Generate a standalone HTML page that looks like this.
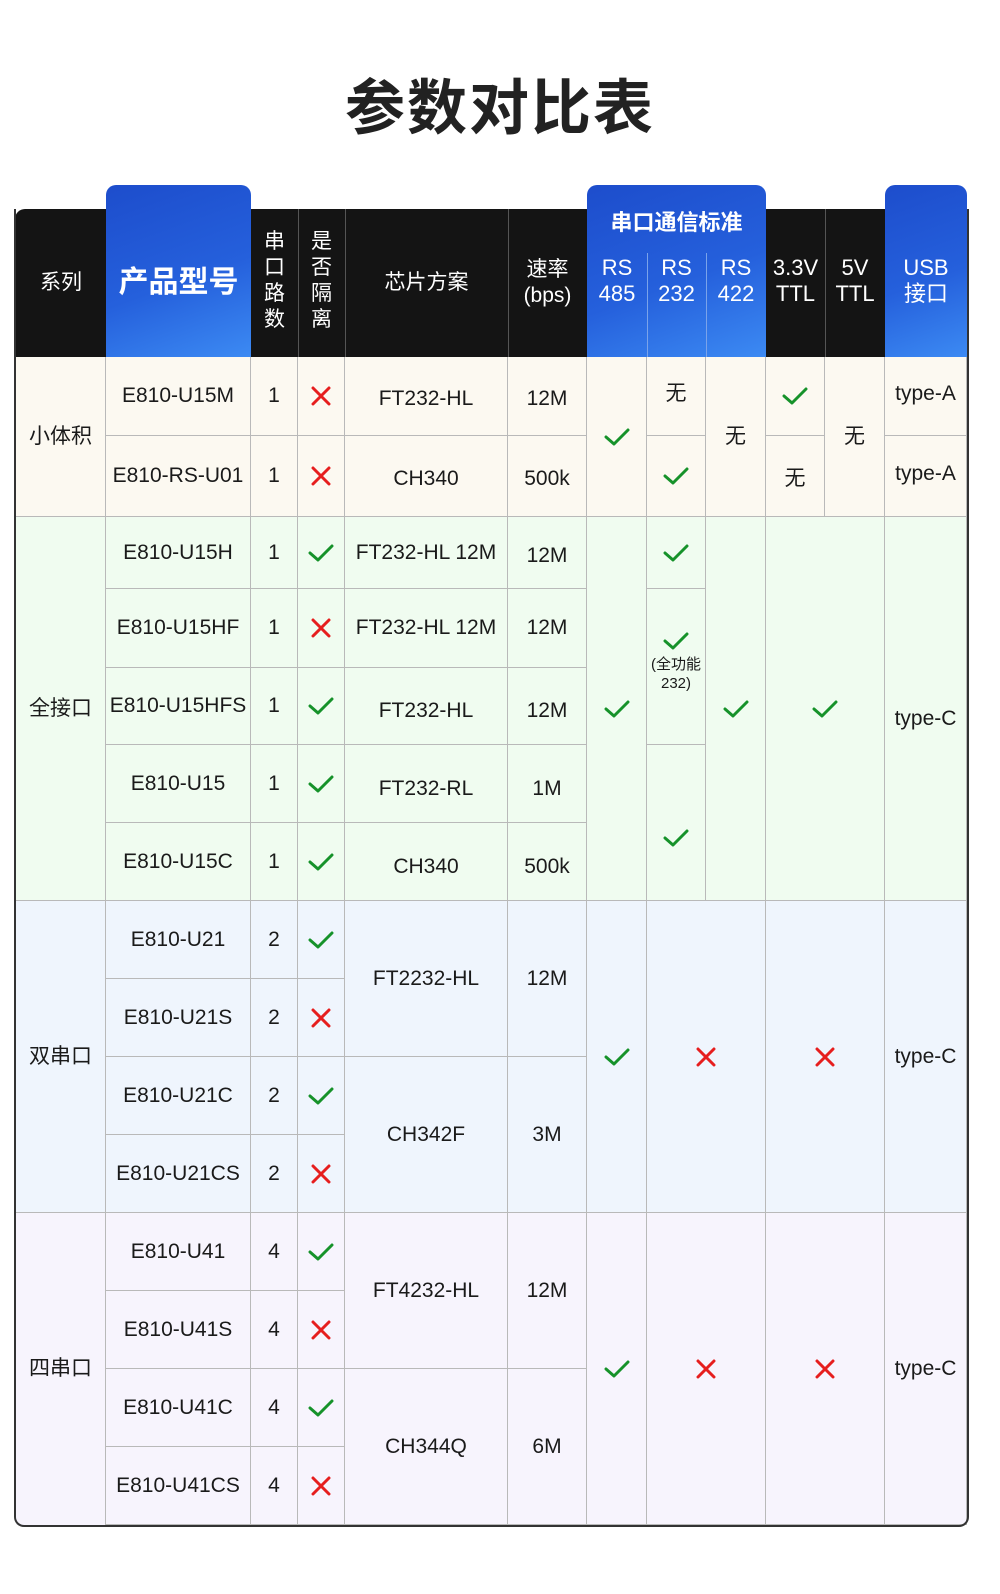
<!DOCTYPE html>
<html><head><meta charset="utf-8"><style>
*{margin:0;padding:0;box-sizing:border-box}
html,body{width:1000px;height:1594px;overflow:hidden;background:#fff}
#w{width:1000px;height:1594px;position:relative;overflow:hidden;font-family:"Liberation Sans","Noto Sans CJK SC",sans-serif;color:#1a1a1a}
.t{position:absolute;left:0;width:1000px;top:62px;text-align:center;font-size:60px;font-weight:bold;color:#222;letter-spacing:2px;font-family:"Noto Sans CJK SC",sans-serif;line-height:84px}
.c{position:absolute;display:flex;align-items:center;justify-content:center;text-align:center;border-right:1px solid #b9b9b9;border-bottom:1px solid #b9b9b9;font-size:21px;line-height:1.2}
.h{position:absolute;display:flex;align-items:center;justify-content:center;text-align:center;color:#fff;font-size:21px;line-height:1.2}
.blue{position:absolute;border-radius:10px 10px 0 0;background:linear-gradient(160deg,#1d4dcc 0%,#2560dc 55%,#3c8af3 100%)}
.vl{position:absolute;width:1px;background:#555}
.g1{background:#fcf9f1}.g2{background:#f0fcf0}.g3{background:#eff5fd}.g4{background:#f7f4fd}
svg{display:block}
</style></head><body><div id="w">
<svg width="0" height="0" style="position:absolute;left:0;top:0"><defs>
<symbol id="ck" viewBox="0 0 26 20"><path d="M2 10 L10 17 L24 3" fill="none" stroke="#16922a" stroke-width="3" stroke-linecap="round" stroke-linejoin="round"/></symbol>
<symbol id="x" viewBox="0 0 20 20"><path d="M2 2 L18 18 M18 2 L2 18" fill="none" stroke="#e61e1e" stroke-width="3" stroke-linecap="round"/></symbol>
</defs></svg>
<div class="t">参数对比表</div>

<div style="position:absolute;left:15px;top:209px;width:952px;height:148px;background:#141414;border-radius:10px 0 0 0"></div>
<div class="blue" style="left:106px;top:185px;width:145px;height:172px"></div>
<div class="blue" style="left:587px;top:185px;width:179px;height:172px"></div>
<div class="blue" style="left:885px;top:185px;width:82px;height:172px"></div>
<div class="vl" style="left:298px;top:209px;height:148px"></div>
<div class="vl" style="left:345px;top:209px;height:148px"></div>
<div class="vl" style="left:508px;top:209px;height:148px"></div>
<div class="vl" style="left:825px;top:209px;height:148px"></div>
<div class="vl" style="left:647px;top:253px;height:104px;background:#7aa3ea"></div>
<div class="vl" style="left:706px;top:253px;height:104px;background:#7aa3ea"></div>
<div class="h" style="left:16px;top:209px;width:90px;height:148px">系列</div>
<div class="h" style="left:106px;top:209px;width:145px;height:148px;font-size:30px;font-weight:bold">产品型号</div>
<div class="h" style="left:251px;top:225px;width:47px;height:112px;font-size:21px;line-height:26px">串<br>口<br>路<br>数</div>
<div class="h" style="left:298px;top:225px;width:47px;height:112px;font-size:21px;line-height:26px">是<br>否<br>隔<br>离</div>
<div class="h" style="left:345px;top:209px;width:163px;height:148px">芯片方案</div>
<div class="h" style="left:508px;top:209px;width:79px;height:148px;line-height:26px">速率<br>(bps)</div>
<div class="h" style="left:587px;top:205px;width:179px;height:36px;font-weight:bold;font-size:22px">串口通信标准</div>
<div class="h" style="left:587px;top:253px;width:60px;height:56px;font-size:22px;line-height:26px">RS<br>485</div>
<div class="h" style="left:647px;top:253px;width:59px;height:56px;font-size:22px;line-height:26px">RS<br>232</div>
<div class="h" style="left:706px;top:253px;width:60px;height:56px;font-size:22px;line-height:26px">RS<br>422</div>
<div class="h" style="left:766px;top:253px;width:59px;height:56px;font-size:22px;line-height:26px">3.3V<br>TTL</div>
<div class="h" style="left:825px;top:253px;width:60px;height:56px;font-size:22px;line-height:26px">5V<br>TTL</div>
<div class="h" style="left:885px;top:253px;width:82px;height:56px;font-size:22px;line-height:26px">USB<br>接口</div>

<div class="c g1" style="left:16px;top:357px;width:90px;height:160px">小体积</div>
<div class="c g1" style="left:106px;top:357px;width:145px;height:79px">E810-U15M</div>
<div class="c g1" style="left:106px;top:436px;width:145px;height:81px">E810-RS-U01</div>
<div class="c g1" style="left:251px;top:357px;width:47px;height:79px">1</div>
<div class="c g1" style="left:251px;top:436px;width:47px;height:81px">1</div>
<div class="c g1" style="left:298px;top:357px;width:47px;height:79px"><svg width="20" height="20"><use href="#x"/></svg></div>
<div class="c g1" style="left:298px;top:436px;width:47px;height:81px"><svg width="20" height="20"><use href="#x"/></svg></div>
<div class="c g1" style="left:345px;top:357px;width:163px;height:79px;padding-top:6px">FT232-HL</div>
<div class="c g1" style="left:345px;top:436px;width:163px;height:81px;padding-top:6px">CH340</div>
<div class="c g1" style="left:508px;top:357px;width:79px;height:79px;padding-top:6px">12M</div>
<div class="c g1" style="left:508px;top:436px;width:79px;height:81px;padding-top:6px">500k</div>
<div class="c g1" style="left:587px;top:357px;width:60px;height:160px"><svg width="26" height="20"><use href="#ck"/></svg></div>
<div class="c g1" style="left:647px;top:357px;width:59px;height:79px;padding-bottom:4px">无</div>
<div class="c g1" style="left:647px;top:436px;width:59px;height:81px"><svg width="26" height="20"><use href="#ck"/></svg></div>
<div class="c g1" style="left:706px;top:357px;width:60px;height:160px">无</div>
<div class="c g1" style="left:766px;top:357px;width:59px;height:79px"><svg width="26" height="20"><use href="#ck"/></svg></div>
<div class="c g1" style="left:766px;top:436px;width:59px;height:81px;padding-top:6px">无</div>
<div class="c g1" style="left:825px;top:357px;width:60px;height:160px">无</div>
<div class="c g1" style="left:885px;top:357px;width:82px;height:79px;padding-bottom:4px">type-A</div>
<div class="c g1" style="left:885px;top:436px;width:82px;height:81px;padding-bottom:4px">type-A</div>

<div class="c g2" style="left:16px;top:517px;width:90px;height:384px">全接口</div>
<div class="c g2" style="left:106px;top:517px;width:145px;height:72px">E810-U15H</div>
<div class="c g2" style="left:106px;top:589px;width:145px;height:79px">E810-U15HF</div>
<div class="c g2" style="left:106px;top:668px;width:145px;height:77px">E810-U15HFS</div>
<div class="c g2" style="left:106px;top:745px;width:145px;height:78px">E810-U15</div>
<div class="c g2" style="left:106px;top:823px;width:145px;height:78px">E810-U15C</div>
<div class="c g2" style="left:251px;top:517px;width:47px;height:72px">1</div>
<div class="c g2" style="left:251px;top:589px;width:47px;height:79px">1</div>
<div class="c g2" style="left:251px;top:668px;width:47px;height:77px">1</div>
<div class="c g2" style="left:251px;top:745px;width:47px;height:78px">1</div>
<div class="c g2" style="left:251px;top:823px;width:47px;height:78px">1</div>
<div class="c g2" style="left:298px;top:517px;width:47px;height:72px"><svg width="26" height="20"><use href="#ck"/></svg></div>
<div class="c g2" style="left:298px;top:589px;width:47px;height:79px"><svg width="20" height="20"><use href="#x"/></svg></div>
<div class="c g2" style="left:298px;top:668px;width:47px;height:77px"><svg width="26" height="20"><use href="#ck"/></svg></div>
<div class="c g2" style="left:298px;top:745px;width:47px;height:78px"><svg width="26" height="20"><use href="#ck"/></svg></div>
<div class="c g2" style="left:298px;top:823px;width:47px;height:78px"><svg width="26" height="20"><use href="#ck"/></svg></div>
<div class="c g2" style="left:345px;top:517px;width:163px;height:72px">FT232-HL 12M</div>
<div class="c g2" style="left:345px;top:589px;width:163px;height:79px">FT232-HL 12M</div>
<div class="c g2" style="left:345px;top:668px;width:163px;height:77px;padding-top:10px">FT232-HL</div>
<div class="c g2" style="left:345px;top:745px;width:163px;height:78px;padding-top:10px">FT232-RL</div>
<div class="c g2" style="left:345px;top:823px;width:163px;height:78px;padding-top:10px">CH340</div>
<div class="c g2" style="left:508px;top:517px;width:79px;height:72px;padding-top:6px">12M</div>
<div class="c g2" style="left:508px;top:589px;width:79px;height:79px">12M</div>
<div class="c g2" style="left:508px;top:668px;width:79px;height:77px;padding-top:10px">12M</div>
<div class="c g2" style="left:508px;top:745px;width:79px;height:78px;padding-top:10px">1M</div>
<div class="c g2" style="left:508px;top:823px;width:79px;height:78px;padding-top:10px">500k</div>
<div class="c g2" style="left:587px;top:517px;width:60px;height:384px"><svg width="26" height="20"><use href="#ck"/></svg></div>
<div class="c g2" style="left:647px;top:517px;width:59px;height:72px"><svg width="26" height="20"><use href="#ck"/></svg></div>
<div class="c g2" style="left:647px;top:589px;width:59px;height:156px;flex-direction:column;font-size:15px;line-height:19px;padding-bottom:10px"><svg width="26" height="20" style="margin-bottom:4px"><use href="#ck"/></svg>(全功能<br>232)</div>
<div class="c g2" style="left:647px;top:745px;width:59px;height:156px;padding-top:30px"><svg width="26" height="20"><use href="#ck"/></svg></div>
<div class="c g2" style="left:706px;top:517px;width:60px;height:384px"><svg width="26" height="20"><use href="#ck"/></svg></div>
<div class="c g2" style="left:766px;top:517px;width:119px;height:384px"><svg width="26" height="20"><use href="#ck"/></svg></div>
<div class="c g2" style="left:885px;top:517px;width:82px;height:384px;padding-top:20px">type-C</div>

<div class="c g3" style="left:16px;top:901px;width:90px;height:312px">双串口</div>
<div class="c g3" style="left:106px;top:901px;width:145px;height:78px">E810-U21</div>
<div class="c g3" style="left:106px;top:979px;width:145px;height:78px">E810-U21S</div>
<div class="c g3" style="left:106px;top:1057px;width:145px;height:78px">E810-U21C</div>
<div class="c g3" style="left:106px;top:1135px;width:145px;height:78px">E810-U21CS</div>
<div class="c g3" style="left:251px;top:901px;width:47px;height:78px">2</div>
<div class="c g3" style="left:251px;top:979px;width:47px;height:78px">2</div>
<div class="c g3" style="left:251px;top:1057px;width:47px;height:78px">2</div>
<div class="c g3" style="left:251px;top:1135px;width:47px;height:78px">2</div>
<div class="c g3" style="left:298px;top:901px;width:47px;height:78px"><svg width="26" height="20"><use href="#ck"/></svg></div>
<div class="c g3" style="left:298px;top:979px;width:47px;height:78px"><svg width="20" height="20"><use href="#x"/></svg></div>
<div class="c g3" style="left:298px;top:1057px;width:47px;height:78px"><svg width="26" height="20"><use href="#ck"/></svg></div>
<div class="c g3" style="left:298px;top:1135px;width:47px;height:78px"><svg width="20" height="20"><use href="#x"/></svg></div>
<div class="c g3" style="left:345px;top:901px;width:163px;height:156px">FT2232-HL</div>
<div class="c g3" style="left:345px;top:1057px;width:163px;height:156px">CH342F</div>
<div class="c g3" style="left:508px;top:901px;width:79px;height:156px">12M</div>
<div class="c g3" style="left:508px;top:1057px;width:79px;height:156px">3M</div>
<div class="c g3" style="left:587px;top:901px;width:60px;height:312px"><svg width="26" height="20"><use href="#ck"/></svg></div>
<div class="c g3" style="left:647px;top:901px;width:119px;height:312px"><svg width="20" height="20"><use href="#x"/></svg></div>
<div class="c g3" style="left:766px;top:901px;width:119px;height:312px"><svg width="20" height="20"><use href="#x"/></svg></div>
<div class="c g3" style="left:885px;top:901px;width:82px;height:312px">type-C</div>

<div class="c g4" style="left:16px;top:1213px;width:90px;height:312px;border-bottom:none">四串口</div>
<div class="c g4" style="left:106px;top:1213px;width:145px;height:78px">E810-U41</div>
<div class="c g4" style="left:106px;top:1291px;width:145px;height:78px">E810-U41S</div>
<div class="c g4" style="left:106px;top:1369px;width:145px;height:78px">E810-U41C</div>
<div class="c g4" style="left:106px;top:1447px;width:145px;height:78px">E810-U41CS</div>
<div class="c g4" style="left:251px;top:1213px;width:47px;height:78px">4</div>
<div class="c g4" style="left:251px;top:1291px;width:47px;height:78px">4</div>
<div class="c g4" style="left:251px;top:1369px;width:47px;height:78px">4</div>
<div class="c g4" style="left:251px;top:1447px;width:47px;height:78px">4</div>
<div class="c g4" style="left:298px;top:1213px;width:47px;height:78px"><svg width="26" height="20"><use href="#ck"/></svg></div>
<div class="c g4" style="left:298px;top:1291px;width:47px;height:78px"><svg width="20" height="20"><use href="#x"/></svg></div>
<div class="c g4" style="left:298px;top:1369px;width:47px;height:78px"><svg width="26" height="20"><use href="#ck"/></svg></div>
<div class="c g4" style="left:298px;top:1447px;width:47px;height:78px"><svg width="20" height="20"><use href="#x"/></svg></div>
<div class="c g4" style="left:345px;top:1213px;width:163px;height:156px">FT4232-HL</div>
<div class="c g4" style="left:345px;top:1369px;width:163px;height:156px">CH344Q</div>
<div class="c g4" style="left:508px;top:1213px;width:79px;height:156px">12M</div>
<div class="c g4" style="left:508px;top:1369px;width:79px;height:156px">6M</div>
<div class="c g4" style="left:587px;top:1213px;width:60px;height:312px"><svg width="26" height="20"><use href="#ck"/></svg></div>
<div class="c g4" style="left:647px;top:1213px;width:119px;height:312px"><svg width="20" height="20"><use href="#x"/></svg></div>
<div class="c g4" style="left:766px;top:1213px;width:119px;height:312px"><svg width="20" height="20"><use href="#x"/></svg></div>
<div class="c g4" style="left:885px;top:1213px;width:82px;height:312px">type-C</div>

<div style="position:absolute;left:14px;top:209px;width:955px;height:1318px;border:2px solid #333;border-top:none;border-radius:0 0 10px 10px;pointer-events:none"></div>
</div></body></html>
